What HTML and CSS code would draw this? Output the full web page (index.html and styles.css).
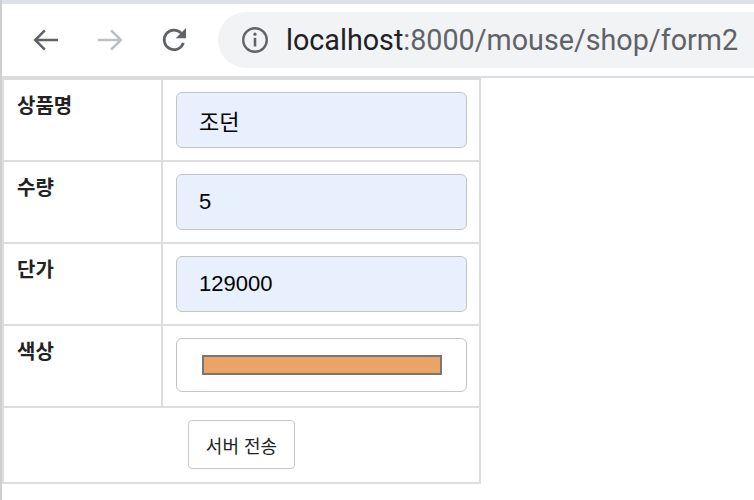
FILE: index.html
```html
<!DOCTYPE html>
<html lang="ko">
<head>
<meta charset="utf-8">
<title>form2</title>
<link rel="stylesheet" href="styles.css">
</head>
<body>
<div class="window">
  <header class="toolbar">
    <div class="nav">
      <svg class="icon back" width="32" height="32" viewBox="0 0 28 28"><path d="M24.5 14H5M13 5.5L4.5 14L13 22.5" fill="none" stroke="currentColor" stroke-width="2.2" stroke-linecap="butt"/></svg>
      <svg class="icon fwd" width="32" height="32" viewBox="0 0 28 28"><path d="M3.5 14H23M15 5.5L23.5 14L15 22.5" fill="none" stroke="currentColor" stroke-width="2.2"/></svg>
      <svg class="icon reload" width="32" height="32" viewBox="0 0 28 28"><path d="M22.2 16.5A8.6 8.6 0 1 1 20.3 8" fill="none" stroke="currentColor" stroke-width="2.4"/><path d="M24.5 3.5V12.5H15.5Z" fill="currentColor"/></svg>
    </div>
    <div class="omnibox">
      <svg class="info" width="30" height="30" viewBox="0 0 28 28"><circle cx="14" cy="14" r="11" fill="none" stroke="currentColor" stroke-width="2.2"/><rect x="12.8" y="12" width="2.4" height="8" fill="currentColor"/><circle cx="14" cy="8.6" r="1.5" fill="currentColor"/></svg>
      <span class="url"><span class="host">localhost</span>:8000/mouse/shop/form2</span>
    </div>
  </header>
  <main class="page">
    <form class="form">
      <table class="grid">
        <tr>
          <th>상품명</th>
          <td><input class="field" type="text" value="조던"></td>
        </tr>
        <tr>
          <th>수량</th>
          <td><input class="field" type="text" value="5"></td>
        </tr>
        <tr>
          <th>단가</th>
          <td><input class="field" type="text" value="129000"></td>
        </tr>
        <tr>
          <th>색상</th>
          <td><div class="color-field"><span class="swatch"></span></div></td>
        </tr>
        <tr>
          <td class="actions" colspan="2"><button class="submit" type="button">서버 전송</button></td>
        </tr>
      </table>
    </form>
  </main>
</div>
</body>
</html>
```

FILE: styles.css
```css
* { box-sizing: border-box; }
html, body { margin: 0; padding: 0; background: #fff; }
body {
  font-family: "Liberation Sans", "Noto Sans CJK KR", sans-serif;
  color: #000;
}
.window {
  height: 500px;
  border-left: 2px solid #cfcfcf;
  overflow: hidden;
}
.toolbar {
  height: 78px;
  border-top: 4px solid #dee1e6;
  border-bottom: 2px solid #dadce0;
  display: flex;
  align-items: center;
  background: #fff;
}
.nav {
  display: flex;
  align-items: center;
  gap: 32px;
  padding-left: 28px;
  width: 216px;
}
.icon { display: block; }
.back { color: #5f6368; }
.fwd { color: #bdc1c6; }
.reload { color: #5f6368; }
.omnibox {
  flex: 1;
  height: 56px;
  background: #f1f3f4;
  border-radius: 28px 0 0 28px;
  display: flex;
  align-items: center;
  padding-left: 22px;
  gap: 16px;
}
.info { color: #5f6368; display: block; }
.url {
  font-family: Roboto, "Liberation Sans", sans-serif;
  font-size: 28.7px;
  color: #5f6368;
  white-space: nowrap;
}
.host { color: #202124; }

.page { padding: 0; }
.form { margin: 0; }
.grid {
  border-collapse: separate;
  border-spacing: 0;
  border-top: 2px solid #dddddd;
  border-left: 2px solid #dddddd;
  width: 479px;
}
.grid th, .grid td {
  border-right: 2px solid #dddddd;
  border-bottom: 2px solid #dddddd;
  padding: 0;
}
.grid th {
  width: 159px;
  height: 82px;
  text-align: left;
  vertical-align: top;
  padding: 10px 0 0 13px;
  font-family: "Noto Sans CJK KR", sans-serif;
  font-size: 20px;
  font-weight: bold;
  color: #222;
}
.grid td {
  vertical-align: top;
  padding: 12px 0 0 13px;
}
.field {
  display: block;
  width: 291px;
  height: 56px;
  margin: 0;
  border: 1px solid #c4c4c4;
  border-radius: 6px;
  background: #e8f0fe;
  padding: 0 0 0 22px;
  font-family: "Liberation Sans", "Noto Sans CJK KR", sans-serif;
  font-size: 22px;
  color: #000;
  outline: none;
}
.color-field {
  width: 291px;
  height: 54px;
  border: 1px solid #c4c4c4;
  border-radius: 6px;
  background: #fff;
  display: flex;
  align-items: center;
  padding-left: 25px;
}
.swatch {
  display: block;
  width: 240px;
  height: 20px;
  background: #e9a466;
  border: 2px solid #777;
}
.grid td.actions {
  height: 76px;
  text-align: center;
  padding: 12px 0 0 0;
}
.submit {
  width: 107px;
  height: 49px;
  background: #fff;
  border: 1px solid #c8c8c8;
  border-radius: 4px;
  font-family: "Noto Sans CJK KR", sans-serif;
  font-size: 18px;
  color: #222;
  padding: 0;
  cursor: pointer;
}
```
